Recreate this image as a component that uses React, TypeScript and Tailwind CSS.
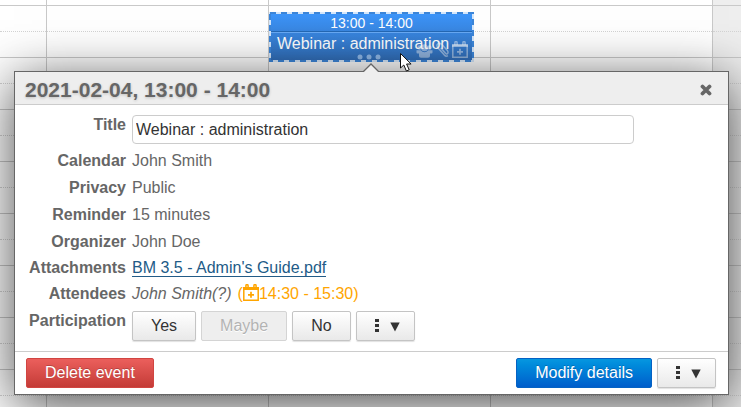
import React from "react";

const DAYS = ["wed", "thu", "fri"];
const SLOTS = Array.from({ length: 8 }, (_, i) => i);

function Slots() {
  return (
    <>
      <div className="h-[6px] border-b border-[#c9c9c9]" />
      {SLOTS.map((slot) => (
        <React.Fragment key={slot}>
          <div className="h-[26px] border-b border-dotted border-[#d4d4d4]" />
          <div className="h-[26px] border-b border-[#c9c9c9]" />
        </React.Fragment>
      ))}
    </>
  );
}

function CalendarPlus({ className }: { className: string }) {
  return (
    <svg viewBox="0 0 16 17" className={className} fill="none" stroke="currentColor" aria-hidden="true">
      <path d="M.8 4.500h14.400v11.700H.8z" strokeWidth="1.5" />
      <path d="M0 3h16v3H0z" fill="currentColor" stroke="none" />
      <path d="M2.900 4V1.700a1.100 1.100 0 0 1 2.200 0V4M10.900 4V1.700a1.100 1.100 0 0 1 2.200 0V4" strokeWidth="1.500" />
      <path d="M8 7.800v6M5 10.800h6" strokeWidth="1.700" />
    </svg>
  );
}

function MoreIcon() {
  return (
    <span className="flex items-center gap-[11px]">
      <svg viewBox="0 0 4 14" className="h-[14px] w-[4px]" fill="currentColor" aria-hidden="true">
        <path d="M0 1h4v3H0zM0 6h4v3H0zM0 11h4v3H0z" />
      </svg>
      <svg viewBox="0 0 10 14" className="h-[14px] w-[10px]" fill="currentColor" aria-hidden="true">
        <path d="M.3 4.500h9.400L5 13.500z" />
      </svg>
    </span>
  );
}

const BUTTON = "flex h-[30px] items-center rounded-[2px] border";
const PLAIN =
  "border-[#c4c4c4] bg-linear-to-b from-white to-[#e9e9e9] text-[#333] shadow-[0_1px_1px_rgba(0,0,0,0.12)]";

function MoreButton({ label }: { label: string }) {
  return (
    <button type="button" aria-label={label} className={`${BUTTON} ${PLAIN} w-[59px] pb-[2px] pl-[18px]`}>
      <MoreIcon />
    </button>
  );
}

function Row({ label, children, tight }: { label: string; children: React.ReactNode; tight?: boolean }) {
  return (
    <div className={`${tight ? "h-[26px]" : "h-[27px]"} grid grid-cols-[111px_1fr] items-center gap-x-[6px]`}>
      <dt className="text-right font-bold">{label}</dt>
      <dd>{children}</dd>
    </div>
  );
}

function CalendarEvent() {
  return (
    <div className="absolute top-[12px] right-[16px] left-0 h-[50px] border-2 border-transparent bg-linear-to-b from-[#3d97fd] to-[#316db6] bg-origin-border text-white">
      <svg className="absolute -top-[2px] -left-[2px] h-[50px] w-[calc(100%+4px)]" aria-hidden="true">
        <rect x="1" y="1" width="203" height="48" fill="none" stroke="#d5e7fb" strokeWidth="2" />
        <rect x="1" y="1" width="203" height="48" fill="none" stroke="#3c86d9" strokeWidth="2" strokeDasharray="6 5" />
      </svg>
      <div className="h-[18px] border-b border-[#2468b4] text-center text-[14px] leading-[18px]">13:00 - 14:00</div>
      <div className="border-t border-[#69aaf5] pl-[6px] text-[16px] leading-[22px]">Webinar : administration</div>
      <div className="absolute right-[4px] bottom-[2px] flex items-end gap-[3px] text-white/45">
        <svg viewBox="0 0 17 14" className="h-[14px] w-[17px]" fill="currentColor" aria-hidden="true">
          <circle cx="3.500" cy="3.500" r="2.200" />
          <circle cx="13.500" cy="3.500" r="2.200" />
          <circle cx="8.500" cy="3.800" r="3.500" />
          <path d="M.5 6.200h4.200q1.500 2 3.800 2t3.800-2h4.200v2.300q0 1-1 1h-1.500V12q0 1.800-2 1.800H5Q3 13.800 3 12V9.500H1.500q-1 0-1-1z" />
        </svg>
        <svg viewBox="0 0 14 16" className="h-[16px] w-[13px]" fill="none" stroke="currentColor" strokeWidth="1.600" aria-hidden="true">
          <path d="M5 5.500l5 5.800q1.500 1.700 2.500.5T12.200 8.500L6.500 2Q4 0 2 1.500T2 5.500l7 8q2 2 3.800.5" />
        </svg>
        <CalendarPlus className="h-[17px] w-[16px]" />
      </div>
      <svg viewBox="0 0 24 6" className="absolute bottom-0 left-[86px] h-[6px] w-[24px]" fill="#8fb8e8" aria-hidden="true">
        <circle cx="3" cy="3" r="2.500" />
        <circle cx="12" cy="3" r="2.500" />
        <circle cx="21" cy="3" r="2.500" />
      </svg>
    </div>
  );
}

export default function App() {
  return (
    <main className="relative h-screen overflow-hidden bg-white font-['Liberation_Sans',Arial,sans-serif] text-[16px] leading-[20px] text-[#666]">
      <div className="grid grid-cols-[47px_1fr_1fr_1fr_28px]">
        <div className="border-r border-[#c9c9c9]">
          <Slots />
        </div>
        {DAYS.map((day) => (
          <div key={day} className="relative border-r border-[#c9c9c9]">
            <Slots />
            {day === "thu" && <CalendarEvent />}
          </div>
        ))}
        <div className="bg-[#eee]">
          <Slots />
        </div>
      </div>

      <section
        role="dialog"
        aria-labelledby="event-time"
        className="absolute top-[71px] right-[12px] left-[14px] border border-[#666] bg-white shadow-[0_10px_50px_rgba(0,0,0,0.7)]"
      >
        <svg viewBox="0 0 18 9" className="absolute -top-[9px] left-[347px] h-[9px] w-[18px]" aria-hidden="true">
          <path d="M1 9L9 1l8 8" fill="#eee" stroke="#666" strokeWidth="1.300" />
        </svg>
        <header className="flex h-[33px] items-center justify-between border-b border-[#ccc] bg-[#eee] pt-[4px] pr-[16px] pl-[10px]">
          <h1 id="event-time" className="text-[21px] font-bold [text-shadow:0_1px_3px_rgba(0,0,0,0.2)]">
            2021-02-04, 13:00 - 14:00
          </h1>
          <button type="button" aria-label="Close">
            <svg
              viewBox="0 0 12 12"
              className="h-[12px] w-[12px]"
              fill="none"
              stroke="currentColor"
              strokeWidth="3.800"
              strokeLinecap="round"
              aria-hidden="true"
            >
              <path d="M2.500 2.500l7 7M9.500 2.500l-7 7" />
            </svg>
          </button>
        </header>

        <div className="pt-[10px] pb-[10px]">
          <div className="grid h-[32px] grid-cols-[111px_1fr] gap-x-[6px] pr-[94px]">
            <label htmlFor="event-title" className="text-right font-bold">
              Title
            </label>
            <input
              id="event-title"
              type="text"
              defaultValue="Webinar : administration"
              className="h-[29px] w-full rounded-[4px] border border-[#ccc] bg-white px-[3px] text-[#333]"
            />
          </div>
          <dl>
            <Row label="Calendar">John Smith</Row>
            <Row label="Privacy">Public</Row>
            <Row label="Reminder">15 minutes</Row>
            <Row label="Organizer">John Doe</Row>
            <Row label="Attachments" tight>
              <a href="#attachment" className="border-b border-[#225b87] text-[#225b87]">
                BM 3.5 - Admin's Guide.pdf
              </a>
            </Row>
            <Row label="Attendees" tight>
              <span className="flex items-center">
                <em>John Smith(?)</em>
                <span className="ml-[6px] flex items-start text-[#ffa500]">
                  (<CalendarPlus className="h-[17px] w-[16px]" />
                  14:30 - 15:30)
                </span>
              </span>
            </Row>
          </dl>
          <div role="group" aria-labelledby="participation" className="grid grid-cols-[111px_1fr] gap-x-[6px] pt-[4px]">
            <span id="participation" className="text-right font-bold">
              Participation
            </span>
            <div className="flex gap-[5px]">
              <button type="button" className={`${BUTTON} ${PLAIN} px-[18px]`}>
                Yes
              </button>
              <button
                type="button"
                disabled
                className={`${BUTTON} border-[#d4d4d4] bg-[#eee] px-[18px] text-[#b3b3b3] [text-shadow:0_1px_0_#fff]`}
              >
                Maybe
              </button>
              <button type="button" className={`${BUTTON} ${PLAIN} px-[18px]`}>
                No
              </button>
              <MoreButton label="More participation choices" />
            </div>
          </div>
        </div>

        <footer className="flex items-center gap-[5px] border-t border-[#ccc] py-[6px] pr-[12px] pl-[11px]">
          <button
            type="button"
            className={`${BUTTON} mr-auto border-[#d14541] bg-linear-to-b from-[#eb5f5c] to-[#c43b37] px-[18px] text-white [text-shadow:0_-1px_0_rgba(0,0,0,0.2)]`}
          >
            Delete event
          </button>
          <button
            type="button"
            className={`${BUTTON} border-[#0562c4] bg-linear-to-b from-[#0797e0] to-[#005dcb] px-[18px] text-white [text-shadow:0_-1px_0_rgba(0,0,0,0.2)]`}
          >
            Modify details
          </button>
          <MoreButton label="More actions" />
        </footer>
      </section>

      <svg viewBox="0 0 14 20" className="absolute top-[52px] left-[399px] h-[20px] w-[14px]" aria-hidden="true">
        <path d="M1.500 1.500v14.500l3.300-3 2.600 6 2.800-1.200-2.600-5.800h4.500z" fill="#fff" stroke="#111" strokeWidth="1" />
      </svg>
    </main>
  );
}
